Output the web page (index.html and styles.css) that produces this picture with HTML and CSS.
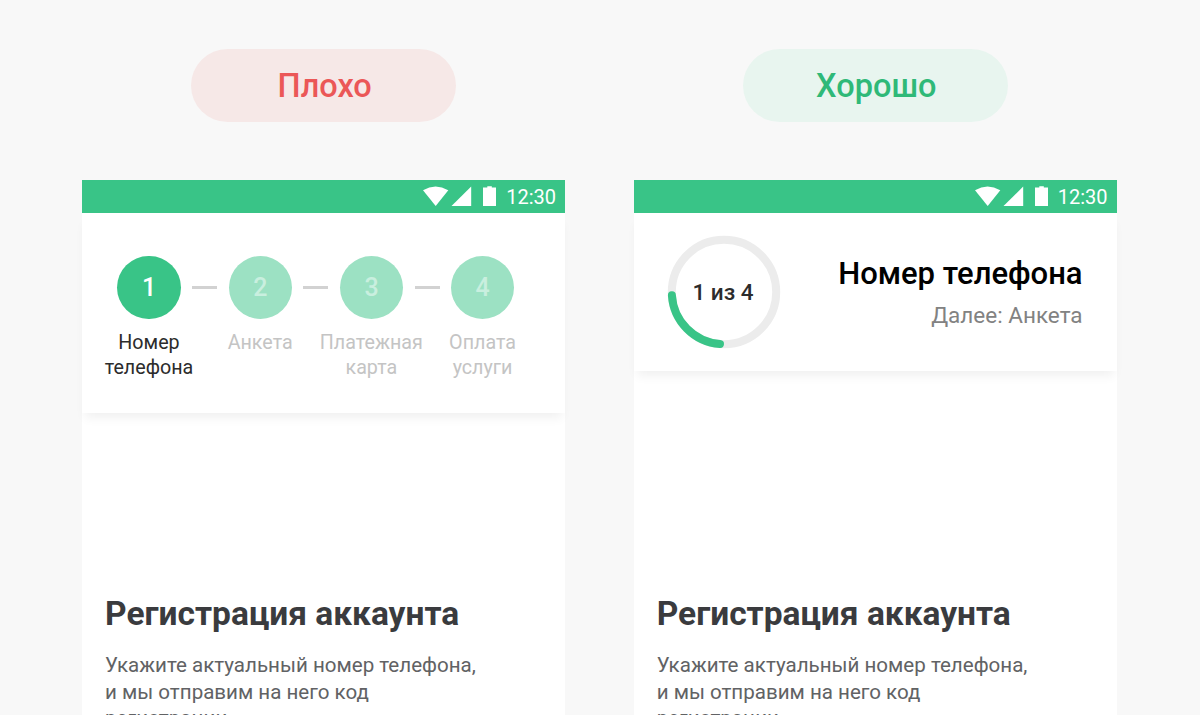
FILE: index.html
```
<!DOCTYPE html>
<html lang="ru">

<head>
  <title>Шаги регистрации</title>
  <meta charset="UTF-8">
  <meta name="viewport" content="width=device-width, initial-scale=1.0">
  <link rel="stylesheet" href="styles.css">
</head>

<body>
  <main class="comparison">
    <section class="example">
      <div class="badge badge-bad">Плохо</div>

      <div class="phone">
        <div class="status-bar">
          <svg class="status-icons" width="75" height="22" viewBox="0 0 75 22">
            <path d="M0 4.2Q12.5 -3 25.3 4.2L12.7 20Z" />
            <path d="M28.5 20L48.2 0.5V20Z" />
            <path d="M60 1.6H64.3V0.3H68.8V1.6H73V20H60Z" />
          </svg>
          <span class="time">12:30</span>
        </div>

        <header class="steps">
          <div class="dots">
            <span class="dot active">1</span>
            <span class="line"></span>
            <span class="dot">2</span>
            <span class="line"></span>
            <span class="dot">3</span>
            <span class="line"></span>
            <span class="dot">4</span>
          </div>
          <div class="labels">
            <span class="label active">Номер<br>телефона</span>
            <span class="label">Анкета</span>
            <span class="label">Платежная<br>карта</span>
            <span class="label">Оплата<br>услуги</span>
          </div>
        </header>

        <div class="content content-steps">
          <h1>Регистрация аккаунта</h1>
          <p>Укажите актуальный номер телефона,<br>и мы отправим на него код<br>регистрации</p>
        </div>
      </div>
    </section>

    <section class="example">
      <div class="badge badge-good">Хорошо</div>

      <div class="phone">
        <div class="status-bar">
          <svg class="status-icons" width="75" height="22" viewBox="0 0 75 22">
            <path d="M0 4.2Q12.5 -3 25.3 4.2L12.7 20Z" />
            <path d="M28.5 20L48.2 0.5V20Z" />
            <path d="M60 1.6H64.3V0.3H68.8V1.6H73V20H60Z" />
          </svg>
          <span class="time">12:30</span>
        </div>

        <header class="progress">
          <svg class="ring" width="114" height="114" viewBox="0 0 114 114">
            <circle class="ring-track" cx="57" cy="57" r="52.2" />
            <path class="ring-value" d="M4.9 60.2A52.2 52.2 0 0 0 53 109" />
            <text x="56" y="65">1 из 4</text>
          </svg>
          <div class="progress-text">
            <h2>Номер телефона</h2>
            <p>Далее: Анкета</p>
          </div>
        </header>

        <div class="content content-progress">
          <h1>Регистрация аккаунта</h1>
          <p>Укажите актуальный номер телефона,<br>и мы отправим на него код<br>регистрации</p>
        </div>
      </div>
    </section>
  </main>
</body>

</html>
```

FILE: styles.css
```
:root {
  --green: #39c487;
  --background: #f8f8f8;
  --step-width: 111.2px;
}

* {
  box-sizing: border-box;
  margin: 0;
  padding: 0;
}

body {
  background-color: var(--background);
  font-family: Roboto, "Noto Sans", sans-serif;
  height: 715px;
  overflow: hidden;
}

.comparison {
  display: flex;
  gap: 69px;
  padding: 49px 0 0 82.4px;
}

.example {
  display: flex;
  flex-direction: column;
  align-items: center;
  width: 482.6px;
}

.badge {
  width: 264.5px;
  height: 72.5px;
  margin-bottom: 58.5px;
  padding-left: 2px;
  border-radius: 37px;
  font-size: 32.5px;
  font-weight: 500;
  line-height: 75px;
  text-align: center;
}

.badge-bad {
  background-color: #f6e8e7;
  color: #eb5757;
}

.badge-good {
  background-color: #e8f5ef;
  color: #2fb978;
}

.phone {
  width: 100%;
  height: 560px;
  background-color: #fff;
}

.status-bar {
  display: flex;
  justify-content: flex-end;
  align-items: center;
  height: 33px;
  padding-right: 9px;
  background-color: var(--green);
  color: #fff;
}

.status-icons {
  margin-right: 8px;
  fill: #fff;
}

.time {
  padding-top: 2px;
  font-size: 20px;
  line-height: 31px;
}

/* Header with numbered steps */
.steps {
  height: 200px;
  padding: 42.5px 0 0 11px;
  box-shadow: 0 8px 10px -3px rgba(0, 0, 0, 0.06);
}

.dots {
  display: flex;
  align-items: center;
  gap: 11.35px;
  padding-left: 24px;
}

.dot {
  width: 63.5px;
  height: 63.5px;
  border-radius: 50%;
  background-color: #9ce1c3;
  color: #c9efdf;
  font-size: 25px;
  font-weight: 500;
  line-height: 63.5px;
  text-align: center;
}

.dot.active {
  background-color: var(--green);
  color: #fff;
}

.line {
  width: 25px;
  height: 3px;
  background-color: #d2d2d2;
}

.labels {
  display: flex;
  padding-top: 11px;
}

.label {
  width: var(--step-width);
  color: #c4c4c4;
  font-size: 19.7px;
  line-height: 25px;
  text-align: center;
}

.label.active {
  color: #2c2c2c;
}

/* Header with a progress ring */
.progress {
  display: flex;
  justify-content: space-between;
  height: 158px;
  padding: 22px 34px 0 33.5px;
  box-shadow: 0 8px 10px -3px rgba(0, 0, 0, 0.06);
}

.ring circle,
.ring path {
  fill: none;
  stroke-width: 8;
}

.ring .ring-track {
  stroke: #ececec;
}

.ring .ring-value {
  stroke: var(--green);
  stroke-linecap: round;
}

.ring text {
  fill: #2c2c2c;
  font-size: 22.5px;
  font-weight: 500;
  text-anchor: middle;
}

.progress-text {
  padding-top: 20px;
  text-align: right;
}

.progress-text h2 {
  font-size: 31px;
  font-weight: 500;
  line-height: 38px;
}

.progress-text p {
  margin-top: 4px;
  color: #828282;
  font-size: 22.5px;
  line-height: 36px;
}

/* Form intro */
.content {
  padding-left: 22.7px;
}

.content-steps {
  padding-top: 181px;
}

.content-progress {
  padding-top: 223px;
}

.content h1 {
  color: #3a3b3e;
  font-size: 33.5px;
  font-weight: 700;
  line-height: 40px;
}

.content p {
  margin-top: 18px;
  color: #616264;
  font-size: 20.57px;
  line-height: 26.5px;
}
```
